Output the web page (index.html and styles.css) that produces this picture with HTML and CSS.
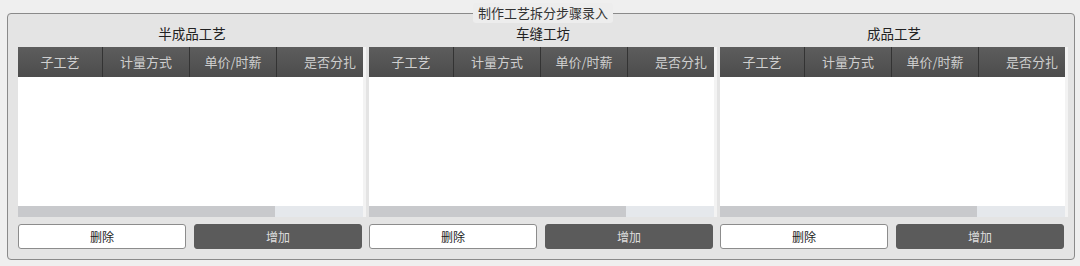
FILE: index.html
```html
<!DOCTYPE html>
<html lang="zh-CN">

<head>
    <meta charset="UTF-8">
    <title>制作工艺拆分步骤录入</title>
    <link rel="stylesheet" href="styles.css">
</head>

<body>
    <fieldset class="steps">
        <legend>制作工艺拆分步骤录入</legend>

        <div class="panels">
            <div class="panel">
                <div class="panel-title">半成品工艺</div>
                <div class="grid">
                    <div class="grid-head">
                        <div class="col c1">子工艺</div>
                        <div class="col c2">计量方式</div>
                        <div class="col c3">单价/时薪</div>
                        <div class="col c4">是否分扎</div>
                    </div>
                    <div class="grid-body"></div>
                    <div class="hscroll"><div class="thumb"></div></div>
                </div>
                <div class="actions">
                    <button class="btn btn-light">删除</button>
                    <button class="btn btn-dark">增加</button>
                </div>
            </div>

            <div class="panel">
                <div class="panel-title">车缝工坊</div>
                <div class="grid">
                    <div class="grid-head">
                        <div class="col c1">子工艺</div>
                        <div class="col c2">计量方式</div>
                        <div class="col c3">单价/时薪</div>
                        <div class="col c4">是否分扎</div>
                    </div>
                    <div class="grid-body"></div>
                    <div class="hscroll"><div class="thumb"></div></div>
                </div>
                <div class="actions">
                    <button class="btn btn-light">删除</button>
                    <button class="btn btn-dark">增加</button>
                </div>
            </div>

            <div class="panel">
                <div class="panel-title">成品工艺</div>
                <div class="grid">
                    <div class="grid-head">
                        <div class="col c1">子工艺</div>
                        <div class="col c2">计量方式</div>
                        <div class="col c3">单价/时薪</div>
                        <div class="col c4">是否分扎</div>
                    </div>
                    <div class="grid-body"></div>
                    <div class="hscroll"><div class="thumb"></div></div>
                </div>
                <div class="actions">
                    <button class="btn btn-light">删除</button>
                    <button class="btn btn-dark">增加</button>
                </div>
            </div>
        </div>
    </fieldset>
</body>

</html>
```

FILE: styles.css
```css
* {
    box-sizing: border-box;
}

body {
    margin: 0;
    background: #efefef;
    font-family: "Noto Sans CJK SC", "Microsoft YaHei", sans-serif;
    font-size: 12px;
    color: #222;
}

.steps {
    margin: 3px 5px 0 7px;
    padding: 0 6px 10px 10px;
    height: 257px;
    border: 1px solid #8a8a8a;
    border-radius: 4px;
    background: #e4e4e4;
}

.steps legend {
    margin: 0 auto;
    padding: 0 5px;
    height: 20px;
    line-height: 20px;
    font-size: 13px;
    color: #333;
    background: #ededed;
    border-radius: 3px;
}

.panels {
    display: flex;
    gap: 3px;
}

.panel {
    width: 348px;
}

.panel-title {
    padding-top: 1px;
    height: 24px;
    line-height: 18px;
    text-align: center;
    font-size: 13.5px;
    color: #222;
}

.grid {
    width: 348px;
    border-right: 3px solid #f3f3f3;
    overflow: hidden;
}

.grid-head {
    display: flex;
    height: 30px;
    background: linear-gradient(#5d5d5d, #4c4c4c);
    white-space: nowrap;
}

.col {
    flex: none;
    line-height: 30px;
    text-align: center;
    font-size: 13px;
    color: #cfcfcf;
    border-right: 1px solid #333;
}

.c1 {
    width: 85px;
}

.c2,
.c3 {
    width: 87px;
}

.c4 {
    width: 106px;
    border-right: none;
}

.grid-body {
    height: 129px;
    background: #fff;
}

.hscroll {
    height: 11px;
    background: #e5e8ec;
}

.thumb {
    width: 257px;
    height: 100%;
    background: #c8c9cc;
}

.actions {
    display: flex;
    gap: 8px;
    margin-top: 7px;
    padding-right: 4px;
}

.btn {
    flex: 1;
    height: 25px;
    font-family: inherit;
    font-size: 12px;
    border-radius: 3px;
    cursor: pointer;
}

.btn-light {
    background: #fff;
    color: #222;
    border: 1px solid #8c8c8c;
}

.btn-dark {
    background: #5b5b5b;
    color: #ddd;
    border: 1px solid #5b5b5b;
}
```
